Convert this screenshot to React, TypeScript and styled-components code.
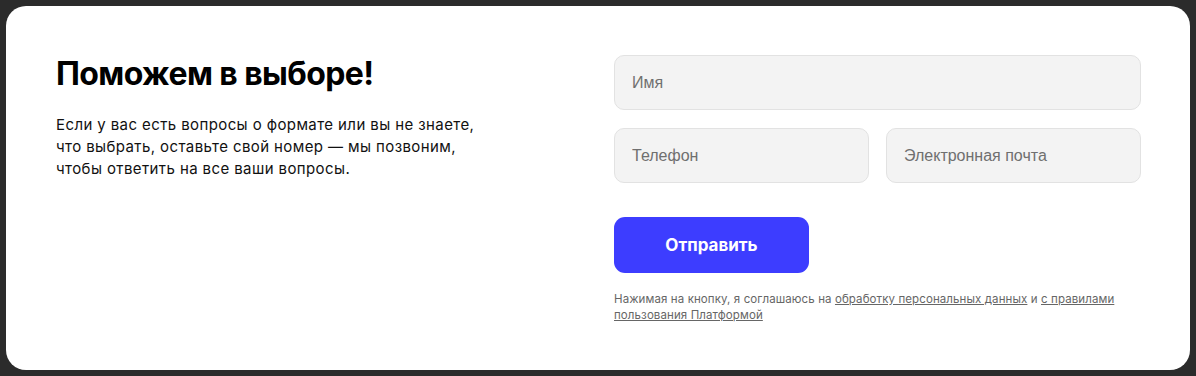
import React from "react";
import styled, { createGlobalStyle } from "styled-components";

const Global = createGlobalStyle`
  html, body { margin: 0; padding: 0; background: #2b2b2b; }
  body { padding: 6px; font-family: "Inter", "Liberation Sans", sans-serif; }
  * { box-sizing: border-box; }
`;

const Card = styled.section`
  background: #fff;
  border-radius: 20px;
  width: 1184px;
  height: 364px;
  padding: 49px 49px 0 50px;
  display: grid;
  grid-template-columns: 1fr 527px;
`;

const Intro = styled.div`
  display: flex;
  flex-direction: column;
`;

const Title = styled.h2`
  margin: -1px 0 0;
  font-family: "Inter", sans-serif;
  font-weight: 700;
  font-size: 32px;
  line-height: 40px;
  letter-spacing: -0.6px;
  color: #000;
`;

const Lead = styled.p`
  margin: 20px 0 0;
  font-family: "Inter", sans-serif;
  font-size: 15px;
  line-height: 22px;
  letter-spacing: 0.4px;
  color: #111;
  max-width: 430px;
`;

const Form = styled.form`
  display: flex;
  flex-direction: column;
`;

const Row = styled.div<{ $cols: number }>`
  display: grid;
  grid-template-columns: repeat(${(p) => p.$cols}, 1fr);
  gap: 17px;
  margin-bottom: 18px;
`;

const Field = styled.input`
  height: 55px;
  width: 100%;
  border: 1px solid #e2e2e2;
  background: #f3f3f3;
  border-radius: 10px;
  padding: 0 17px;
  font-family: "Liberation Sans", Arial, sans-serif;
  font-size: 16px;
  color: #222;
  outline: none;
  &::placeholder { color: #6f6f6f; }
`;

const Submit = styled.button`
  margin-top: 16px;
  width: 195px;
  height: 56px;
  border: none;
  border-radius: 11px;
  background: #3d3dff;
  color: #fff;
  font-family: "Inter", sans-serif;
  font-weight: 700;
  font-size: 17px;
  cursor: pointer;
`;

const Note = styled.p`
  margin: 18px 0 0;
  font-family: "Inter", sans-serif;
  font-size: 11.5px;
  line-height: 16px;
  letter-spacing: 0.1px;
  color: #666;
  a { color: #666; text-decoration: underline; }
`;

export default function App() {
  return (
    <>
      <Global />
      <Card>
        <Intro>
          <Title>Поможем в выборе!</Title>
          <Lead>
            Если у вас есть вопросы о формате или вы не знаете, что выбрать,
            оставьте свой номер — мы позвоним, чтобы ответить на все ваши
            вопросы.
          </Lead>
        </Intro>
        <Form onSubmit={(e) => e.preventDefault()}>
          <Row $cols={1}>
            <Field placeholder="Имя" />
          </Row>
          <Row $cols={2}>
            <Field placeholder="Телефон" />
            <Field placeholder="Электронная почта" />
          </Row>
          <Submit type="submit">Отправить</Submit>
          <Note>
            Нажимая на кнопку, я соглашаюсь на <a href="#">обработку персональных данных</a> и{" "}
            <a href="#">с правилами пользования Платформой</a>
          </Note>
        </Form>
      </Card>
    </>
  );
}
